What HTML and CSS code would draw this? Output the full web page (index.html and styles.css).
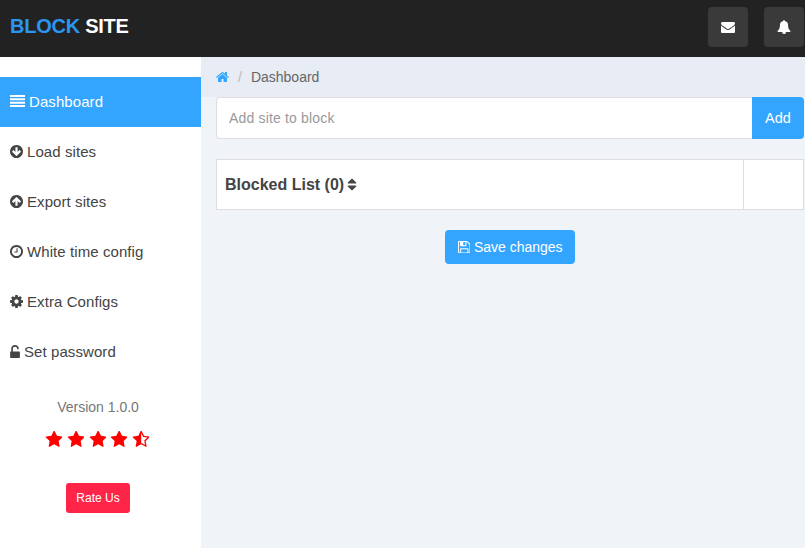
FILE: index.html
```html
<!DOCTYPE html>
<html lang="en">
<head>
<meta charset="utf-8">
<title>Block Site</title>
<link rel="stylesheet" href="styles.css">
</head>
<body>
<svg class="defs" width="0" height="0" aria-hidden="true">
  <defs>
    <path id="star" d="M1728 647q0 22-26 48l-363 354 86 500q1 7 1 20 0 21-10.500 35.500t-30.500 14.500q-19 0-40-12l-449-236-449 236q-22 12-40 12-21 0-31.500-14.500t-10.500-35.500q0-6 2-20l86-500-364-354q-25-27-25-48 0-37 56-46l502-73 225-455q19-41 49-41t49 41l225 455 502 73q56 9 56 46z"/>
  </defs>
</svg>
<header class="topbar">
  <div class="brand"><span class="brand-a">BLOCK</span> SITE</div>
  <div class="top-actions">
    <button class="top-btn"><svg class="top-icon" viewBox="0 0 1792 1792"><path d="M1792 710v794q0 66-47 113t-113 47h-1472q-66 0-113-47t-47-113v-794q44 49 101 87 362 246 497 345 57 42 92.500 65.500t94.500 48 110 24.500h2q51 0 110-24.500t94.500-48 92.500-65.500q170-123 498-345 57-39 100-87zm0-294q0 79-49 151t-122 123q-376 261-468 325-10 7-42.500 30.500t-54 38-52 32.500-57.500 27-50 9h-2q-23 0-50-9t-57.500-27-52-32.500-54-38-42.500-30.500q-91-64-262-182.500t-205-142.500q-62-42-117-115.500t-55-136.500q0-78 41.500-130t118.500-52h1472q65 0 112.500 47t47.500 113z"/></svg></button>
    <button class="top-btn"><svg class="top-icon" viewBox="0 0 1792 1792"><path d="M912 1696q0-16-16-16-59 0-101.500-42.500t-42.500-101.500q0-16-16-16t-16 16q0 73 51.500 124.500t124.500 51.500q16 0 16-16zm816-288q0 52-38 90t-90 38h-448q0 106-75 181t-181 75-181-75-75-181h-448q-52 0-90-38t-38-90q50-42 91-88t85-119.500 74.500-158.500 50-206 19.500-260q0-152 117-282.500t307-158.500q-8-19-8-39 0-40 28-68t68-28 68 28 28 68q0 20-8 39 190 28 307 158.500t117 282.500q0 139 19.500 260t50 206 74.500 158.500 85 119.500 91 88z"/></svg></button>
  </div>
</header>
<div class="layout">
  <aside class="sidebar">
    <nav class="menu">
      <a class="item active"><svg class="ico ico-bars" viewBox="0 0 15 12"><path d="M0 0h15v2H0zM0 3.300h15v2H0zM0 6.700h15v2H0zM0 10h15v2H0z"/></svg>Dashboard</a>
      <a class="item"><svg class="ico" viewBox="0 128 1536 1536"><path d="M1284 897q0-27-18-45l-91-91q-18-18-45-18t-45 18l-189 189v-502q0-26-19-45t-45-19h-128q-26 0-45 19t-19 45v502l-189-189q-19-19-45-19t-45 19l-91 91q-18 18-18 45t18 45l362 362 91 91q18 18 45 18t45-18l91-91 362-362q18-18 18-45zm252-1q0 209-103 385.500t-279.500 279.500-385.500 103-385.500-103-279.500-279.500-103-385.500 103-385.500 279.500-279.500 385.500-103 385.500 103 279.500 279.500 103 385.500z"/></svg>Load sites</a>
      <a class="item"><svg class="ico" viewBox="0 128 1536 1536"><path d="M1284 895q0-27-18-45l-362-362-91-91q-18-18-45-18t-45 18l-91 91-362 362q-18 18-18 45t18 45l91 91q18 18 45 18t45-18l189-189v502q0 26 19 45t45 19h128q26 0 45-19t19-45v-502l189 189q19 19 45 19t45-19l91-91q18-18 18-45zm252 1q0 209-103 385.500t-279.500 279.500-385.500 103-385.500-103-279.500-279.500-103-385.500 103-385.500 279.500-279.500 385.500-103 385.500 103 279.500 279.500 103 385.500z"/></svg>Export sites</a>
      <a class="item"><svg class="ico" viewBox="0 128 1536 1536"><path d="M896 544v448q0 14-9 23t-23 9h-320q-14 0-23-9t-9-23v-64q0-14 9-23t23-9h224v-352q0-14 9-23t23-9h64q14 0 23 9t9 23zm416 352q0-148-73-273t-198-198-273-73-273 73-198 198-73 273 73 273 198 198 273 73 273-73 198-198 73-273zm224 0q0 209-103 385.500t-279.500 279.500-385.500 103-385.500-103-279.500-279.500-103-385.500 103-385.500 279.500-279.500 385.500-103 385.500 103 279.500 279.500 103 385.500z"/></svg>White time config</a>
      <a class="item"><svg class="ico" viewBox="0 128 1536 1536"><path d="M1024 896q0-106-75-181t-181-75-181 75-75 181 75 181 181 75 181-75 75-181zm512-109v222q0 12-8 23t-20 13l-185 28q-19 54-39 91 35 50 107 138 10 12 10 25t-9 23q-27 37-99 108t-94 71q-12 0-26-9l-138-108q-44 23-91 38-16 136-29 186-7 28-36 28h-222q-14 0-24.500-8.500t-11.500-21.500l-28-184q-49-16-90-37l-141 107q-10 9-25 9-14 0-25-11-126-114-165-168-7-10-7-23 0-12 8-23 15-21 51-66.500t54-70.500q-27-50-41-99l-183-27q-13-2-21-12.500t-8-23.500v-222q0-12 8-23t19-13l186-28q14-46 39-92-40-57-107-138-10-12-10-24 0-10 9-23 26-36 98.500-107.500t94.500-71.500q13 0 26 10l138 107q44-23 91-38 16-136 29-186 7-28 36-28h222q14 0 24.500 8.500t11.500 21.500l28 184q49 16 90 37l142-107q9-9 24-9 13 0 25 10 129 119 165 170 7 8 7 22 0 12-8 23-15 21-51 66.500t-54 70.500q26 50 41 98l183 28q13 2 21 12.500t8 23.500z"/></svg>Extra Configs</a>
      <a class="item"><svg class="ico ico-lock" viewBox="320 0 1152 1536"><path d="M1376 768q40 0 68 28t28 68v576q0 40-28 68t-68 28h-960q-40 0-68-28t-28-68v-576q0-40 28-68t68-28h32v-320q0-185 131.500-316.500t316.500-131.500 316.500 131.500 131.500 316.500q0 26-19 45t-45 19h-64q-26 0-45-19t-19-45q0-106-75-181t-181-75-181 75-75 181v320h736z"/></svg>Set password</a>
    </nav>
    <div class="side-foot">
      <div class="version">Version 1.0.0</div>
      <div class="stars">
        <svg class="star" viewBox="0 64 1664 1664"><use href="#star"/></svg>
        <svg class="star" viewBox="0 64 1664 1664"><use href="#star"/></svg>
        <svg class="star" viewBox="0 64 1664 1664"><use href="#star"/></svg>
        <svg class="star" viewBox="0 64 1664 1664"><use href="#star"/></svg>
        <svg class="star" viewBox="0 64 1664 1664"><path d="M1250 957l257-250-356-52-66-10-30-60-159-322v963l59 31 318 168-60-355-12-66zm452-262l-363 354 86 500q5 33-6 51.500t-34 18.500q-17 0-40-12l-449-236-449 236q-23 12-40 12-23 0-34-18.500t-6-51.500l86-500-364-354q-32-32-23-59.500t54-34.500l502-73 225-455q20-41 49-41 28 0 49 41l225 455 502 73q45 7 54 34.500t-24 59.500z"/></svg>
      </div>
      <button class="rate">Rate Us</button>
    </div>
  </aside>
  <main class="main">
    <div class="crumbs">
      <svg class="home" viewBox="0 128 1664 1536"><path d="M1408 992v480q0 26-19 45t-45 19h-384v-384h-256v384h-384q-26 0-45-19t-19-45v-480q0-1 .5-3t.5-3l575-474 575 474q1 2 1 6zm223-69l-62 74q-8 9-21 11h-3q-13 0-21-7l-692-577-692 577q-12 8-24 7-13-2-21-11l-62-74q-8-10-7-23.500t11-21.500l719-599q32-26 76-26t76 26l244 204v-195q0-14 9-23t23-9h192q14 0 23 9t9 23v408l219 182q10 8 11 21.500t-7 23.500z"/></svg>
      <span class="sep">/</span>
      <span>Dashboard</span>
    </div>
    <div class="content">
      <div class="add-row">
        <input class="add-input" type="text" placeholder="Add site to block">
        <button class="add-btn">Add</button>
      </div>
      <table class="list">
        <tr>
          <th class="list-title">Blocked List (0) <svg class="sort" viewBox="320 128 1152 1536"><path d="M1408 1088q0 26-19 45l-448 448q-19 19-45 19t-45-19l-448-448q-19-19-19-45t19-45 45-19h896q26 0 45 19t19 45zm0-384q0 26-19 45t-45 19h-896q-26 0-45-19t-19-45 19-45l448-448q19-19 45-19t45 19l448 448q19 19 19 45z"/></svg></th>
          <th class="list-side"></th>
        </tr>
      </table>
      <div class="save-row">
        <button class="save"><svg class="save-ico" viewBox="0 128 1536 1536"><path d="M512 1536h768v-384h-768v384zm896 0h128v-896q0-14-10-38.500t-20-34.500l-281-281q-10-10-34-20t-39-10v416q0 40-28 68t-68 28h-576q-40 0-68-28t-28-68v-416h-128v1280h128v-416q0-40 28-68t68-28h832q40 0 68 28t28 68v416zm-384-928v-320q0-13-9.500-22.500t-22.500-9.500h-192q-13 0-22.500 9.500t-9.500 22.500v320q0 13 9.500 22.500t22.500 9.500h192q13 0 22.500-9.500t9.500-22.500zm640 32v928q0 40-28 68t-68 28h-1344q-40 0-68-28t-28-68v-1344q0-40 28-68t68-28h928q40 0 88 20t76 48l280 280q28 28 48 76t20 88z"/></svg>Save changes</button>
      </div>
    </div>
  </main>
</div>
</body>
</html>
```
FILE: styles.css
```css
* { box-sizing: border-box; }
html, body { height: 100%; }
body {
  margin: 0;
  font-family: "Liberation Sans", Arial, sans-serif;
  font-size: 15px;
  color: #444;
  display: flex;
  flex-direction: column;
  overflow: hidden;
  background: #f0f3f7;
}
button { font-family: inherit; border: 0; cursor: pointer; }
.defs { position: absolute; }

.topbar {
  height: 57px;
  flex: none;
  background: #222;
  display: flex;
  align-items: center;
  justify-content: space-between;
  padding: 0 1px 3px 10px;
}
.brand { font-size: 20px; font-weight: 700; color: #fff; letter-spacing: -0.25px; padding-bottom: 1px; }
.brand-a { color: #2b96f0; }
.top-actions { display: flex; gap: 16px; }
.top-btn {
  width: 40px;
  height: 40px;
  border-radius: 4px;
  background: #3a3a3a;
  display: flex;
  align-items: center;
  justify-content: center;
  padding: 0;
}
.top-icon { width: 14px; height: 14px; fill: #fff; }

.layout { flex: 1; display: flex; min-height: 0; }
.sidebar { width: 201px; flex: none; background: #fff; padding-top: 20px; }
.menu { display: flex; flex-direction: column; }
.item {
  height: 50px;
  display: flex;
  align-items: center;
  padding: 0 0 2px 10px;
  color: #444;
  letter-spacing: 0.08px;
}
.item.active { background: #33a5ff; color: #fff; }
.ico { width: 13px; height: 13px; fill: #444; margin-right: 4px; flex: none; }
.ico-bars { width: 15px; height: 12px; fill: #fff; margin-right: 4px; }
.ico-lock { width: 10px; height: 13px; }
.side-foot { display: flex; flex-direction: column; align-items: center; padding-top: 20px; margin-left: -5px; }
.version { font-size: 14px; color: #777; line-height: 20px; }
.stars { display: flex; gap: 4.7px; margin: 14px 0 0 -2px; }
.star { width: 17px; height: 17px; fill: #f00; }
.rate {
  margin-top: 35px;
  width: 64px;
  height: 30px;
  border-radius: 3px;
  background: #ff2548;
  color: #fff;
  font-size: 12px;
}

.main { flex: 1; min-width: 0; display: flex; flex-direction: column; }
.crumbs {
  height: 40px;
  flex: none;
  background: #e8ecf4;
  display: flex;
  align-items: center;
  padding-left: 15px;
  font-size: 14px;
  color: #666;
}
.home { width: 13px; height: 12px; fill: #33a5ff; }
.sep { color: #bbb; margin: 0 9px; }
.content { padding: 0 1px 0 15px; }
.add-row { display: flex; height: 42px; }
.add-input {
  flex: 1;
  min-width: 0;
  border: 1px solid #ddd;
  border-right: 0;
  border-radius: 4px 0 0 4px;
  padding: 0 12px;
  font: 14px "Liberation Sans", Arial, sans-serif;
  letter-spacing: 0.17px;
  background: #fff;
  outline: none;
}
.add-input::placeholder { color: #999; opacity: 1; }
.add-btn {
  width: 52px;
  background: #33a5ff;
  color: #fff;
  font-size: 14.500px;
  border-radius: 0 4px 4px 0;
  padding: 0;
}
.list {
  width: 100%;
  margin-top: 20px;
  border-collapse: collapse;
  background: #fff;
}
.list th { border: 1px solid #ddd; height: 50px; padding: 0; }
.list-title { text-align: left; padding-left: 8px !important; font-size: 16px; color: #444; }
.list-side { width: 60px; }
.sort { width: 10px; height: 13px; fill: #444; vertical-align: -1px; margin-left: -2px; }
.save-row { display: flex; justify-content: center; margin-top: 20px; }
.save {
  width: 130px;
  height: 34px;
  border-radius: 4px;
  background: #33a5ff;
  color: #fff;
  font-size: 14px;
  display: flex;
  align-items: center;
  justify-content: center;
  padding: 0;
}
.save-ico { width: 12.500px; height: 12.500px; fill: #fff; margin-right: 4px; }
```
